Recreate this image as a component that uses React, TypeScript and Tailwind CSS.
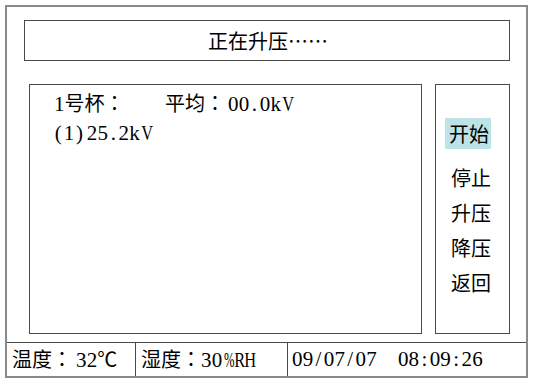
import React from "react";

const CJK = { fontFamily: '"Noto Sans CJK SC", "Liberation Serif", sans-serif' };
const TC = { fontFamily: '"Noto Sans CJK TC", "Noto Sans CJK SC", sans-serif' };
const SERIF = { fontFamily: '"Liberation Serif", "Noto Sans CJK SC", serif' };

function cellClass(ch: string) {
  if (ch === "%") return "inline-block w-[10.6px] text-center scale-x-[0.6]";
  if (ch === "R" || ch === "H" || ch === "V") return "inline-block w-[10.6px] text-center scale-x-[0.78]";
  return "inline-block w-[10.6px] text-center";
}

function M({ s }: { s: string }) {
  return (
    <span className="inline-flex items-baseline text-[21px] leading-none" style={SERIF}>
      {s.split("").map((ch, i) => (
        <span key={i} className={cellClass(ch)}>
          {ch === " " ? "\u00a0" : ch}
        </span>
      ))}
    </span>
  );
}

function Colon() {
  return <span style={TC}>：</span>;
}

export default function App() {
  return (
    <div className="w-[535px] h-[382px] bg-white overflow-hidden text-black" style={CJK}>
      <div className="ml-[5px] mt-[5px] w-[523px] h-[373px] border-2 border-[#8a8a8a] flex flex-col">
        {/* title */}
        <div className="ml-[17px] mt-[13px] w-[486px] h-[41px] border border-[#4a4a4a] flex items-center justify-center text-[20px] leading-none">
          <span className="pl-[2px]">正在升压……</span>
        </div>
        {/* boxes */}
        <div className="flex mt-[23px]">
          <div className="ml-[22px] w-[393px] h-[250px] border border-[#4a4a4a] pl-[24px] pt-[8px] text-[20px]">
            <div className="flex h-[22px] items-baseline leading-none">
              <span className="w-[111px] flex items-baseline">
                <M s="1" />
                <span>号杯</span>
                <Colon />
              </span>
              <span className="flex items-baseline">
                <span>平均</span>
                <Colon />
                <span className="ml-[3px]">
                  <M s="00.0kV" />
                </span>
              </span>
            </div>
            <div className="flex h-[22px] items-baseline mt-[7px] leading-none -ml-[1px]">
              <M s="(1)" />
              <span className="ml-[2px]">
                <M s="25.2kV" />
              </span>
            </div>
          </div>
          <div className="ml-[13px] w-[75px] h-[250px] border border-[#4a4a4a] text-[20px] leading-none">
            <div className="ml-[9px] mt-[33px] w-[46px] h-[31px] bg-[#bde3e6] flex items-center pl-[4px]">
              开始
            </div>
            <div className="mt-[11px] flex flex-col">
              {["停止", "升压", "降压", "返回"].map((t) => (
                <div key={t} className="h-[35px] flex items-center pl-[15px]">
                  {t}
                </div>
              ))}
            </div>
          </div>
        </div>
        {/* status bar */}
        <div className="mt-[8px] flex-1 border-t border-[#4a4a4a] flex text-[20px] leading-none">
          <div className="w-[129px] border-r border-[#4a4a4a] flex items-center pl-[5px]">
            <span className="flex items-baseline">
              <span>温度</span>
              <Colon />
              <span className="ml-[4px]">
                <M s="32" />
              </span>
              <span>℃</span>
            </span>
          </div>
          <div className="w-[152px] border-r border-[#4a4a4a] flex items-center pl-[5px]">
            <span className="flex items-baseline">
              <span>湿度</span>
              <Colon />
              <M s="30%RH" />
            </span>
          </div>
          <div className="flex-1 flex items-center pl-[4px]">
            <M s="09/07/07  08:09:26" />
          </div>
        </div>
      </div>
    </div>
  );
}
